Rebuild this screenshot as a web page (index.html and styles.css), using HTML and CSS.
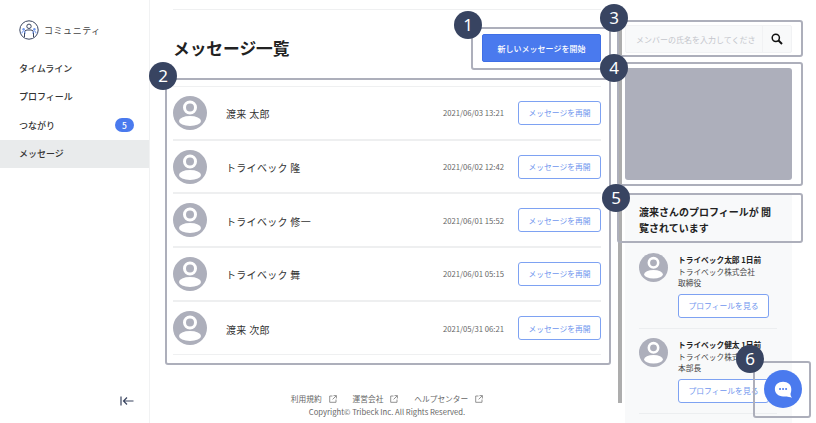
FILE: index.html
```html
<!DOCTYPE html>
<html lang="ja">
<head>
<meta charset="utf-8">
<title>メッセージ一覧</title>
<link rel="stylesheet" href="styles.css">
</head>
<body>
<svg class="defs" width="0" height="0" aria-hidden="true">
  <symbol id="avatar" viewBox="0 0 34 34">
    <circle cx="17" cy="17" r="17" fill="#adafbb"/>
    <circle cx="17" cy="11.5" r="5.5" fill="none" stroke="#fff" stroke-width="3"/>
    <ellipse cx="17" cy="25" rx="11" ry="5" fill="#fff"/>
  </symbol>
  <symbol id="ext" viewBox="0 0 8 8">
    <path d="M3.5 1H.7v6.3H7V4.5M4.5.6h2.900v2.900M7.200.8 3.600 4.400" fill="none" stroke="#777" stroke-width=".8"/>
  </symbol>
</svg>
<div class="app">
  <aside class="sidebar">
    <div class="brand">
      <svg class="brand-icon" viewBox="0 0 20 20" width="20" height="20">
        <circle cx="10" cy="10" r="9.2" fill="#fff" stroke="#3a4560" stroke-width="1"/>
        <circle cx="10" cy="6.300" r="2.200" fill="none" stroke="#3a4560" stroke-width="1"/>
        <path d="M5.500 17V12.500Q5.500 10 8 10h4q2.500 0 2.500 2.500V17" fill="none" stroke="#3a4560" stroke-width="1"/>
        <circle cx="4.600" cy="9.200" r="1.200" fill="#6f97ee"/>
        <circle cx="15.400" cy="9.200" r="1.200" fill="#6f97ee"/>
        <path d="M2.800 13.500q.5-2.500 1.800-2.500t1.800 2.500M13.600 13.500q.5-2.500 1.800-2.500t1.800 2.500" fill="none" stroke="#6f97ee" stroke-width="1"/>
      </svg>
      <span class="brand-name">コミュニティ</span>
    </div>
    <nav class="nav">
      <a class="nav-item">タイムライン</a>
      <a class="nav-item">プロフィール</a>
      <a class="nav-item">つながり<span class="badge">5</span></a>
      <a class="nav-item active">メッセージ</a>
    </nav>
    <div class="collapse">
      <svg viewBox="0 0 14 10" width="14" height="10"><path d="M1 .5v9M13.500 5H3.500M7 1.500 3.500 5 7 8.500" fill="none" stroke="#3a4560" stroke-width="1.200"/></svg>
    </div>
  </aside>

  <main class="main">
    <div class="main-head">
      <h1 class="title">メッセージ一覧</h1>
      <button class="btn-primary">新しいメッセージを開始</button>
    </div>
    <ul class="list">
      <li class="row"><svg class="avatar"><use href="#avatar"/></svg><span class="name">渡来 太郎</span><time class="date">2021/06/03 13:21</time><button class="btn-outline">メッセージを再開</button></li>
      <li class="row"><svg class="avatar"><use href="#avatar"/></svg><span class="name">トライベック 隆</span><time class="date">2021/06/02 12:42</time><button class="btn-outline">メッセージを再開</button></li>
      <li class="row"><svg class="avatar"><use href="#avatar"/></svg><span class="name">トライベック 修一</span><time class="date">2021/06/01 15:52</time><button class="btn-outline">メッセージを再開</button></li>
      <li class="row"><svg class="avatar"><use href="#avatar"/></svg><span class="name">トライベック 舞</span><time class="date">2021/06/01 05:15</time><button class="btn-outline">メッセージを再開</button></li>
      <li class="row"><svg class="avatar"><use href="#avatar"/></svg><span class="name">渡来 次郎</span><time class="date">2021/05/31 06:21</time><button class="btn-outline">メッセージを再開</button></li>
    </ul>
    <footer class="footer">
      <div class="links">
        <a>利用規約<svg class="ext"><use href="#ext"/></svg></a>
        <a>運営会社<svg class="ext"><use href="#ext"/></svg></a>
        <a>ヘルプセンター<svg class="ext"><use href="#ext"/></svg></a>
      </div>
      <p class="copy">Copyright© Tribeck Inc. All Rights Reserved.</p>
    </footer>
  </main>

  <div class="scrollbar"></div>

  <aside class="side">
    <div class="search">
      <input class="search-input" placeholder="メンバーの氏名を入力してください" readonly>
      <button class="search-btn" aria-label="検索">
        <svg viewBox="0 0 12 12" width="12" height="12"><circle cx="4.800" cy="4.800" r="3.600" fill="none" stroke="#111" stroke-width="1.500"/><path d="M7.500 7.500 11 11" stroke="#111" stroke-width="1.900"/></svg>
      </button>
    </div>
    <div class="banner"></div>
    <section class="viewers">
      <h2 class="viewers-title">渡来さんのプロフィールが 閲覧されています</h2>
      <div class="viewer">
        <svg class="viewer-avatar"><use href="#avatar"/></svg>
        <div class="viewer-body">
          <p class="viewer-name">トライベック太郎 1日前</p>
          <p class="viewer-meta">トライベック株式会社</p>
          <p class="viewer-meta">取締役</p>
          <button class="btn-outline btn-profile">プロフィールを見る</button>
        </div>
      </div>
      <div class="viewer">
        <svg class="viewer-avatar"><use href="#avatar"/></svg>
        <div class="viewer-body">
          <p class="viewer-name">トライベック健太 1日前</p>
          <p class="viewer-meta">トライベック株式会社</p>
          <p class="viewer-meta">本部長</p>
          <button class="btn-outline btn-profile">プロフィールを見る</button>
        </div>
      </div>
    </section>
  </aside>
</div>

<div class="note note-1"></div>
<div class="note note-2"></div>
<div class="note note-3"></div>
<div class="note note-4"></div>
<div class="note note-5"></div>
<div class="note note-6"></div>
<span class="pin pin-1">1</span>
<span class="pin pin-2">2</span>
<span class="pin pin-3">3</span>
<span class="pin pin-4">4</span>
<span class="pin pin-5">5</span>
<span class="pin pin-6">6</span>
<button class="chat" aria-label="チャット">
  <svg viewBox="0 0 22 22" width="19" height="19"><path d="M10.500 2C5 2 1 5.500 1 10.500S5 19 10.500 19c2.500 0 5 0 10.500 1.500-1.500-1.800-2-3-1.800-5 .8-1.500.8-3.200.8-5C20 5.500 16 2 10.500 2Z" fill="#fff"/><circle cx="7" cy="10.500" r="1.200" fill="#4a7aee"/><circle cx="10.500" cy="10.500" r="1.200" fill="#4a7aee"/><circle cx="14" cy="10.500" r="1.200" fill="#4a7aee"/></svg>
</button>
</body>
</html>
```
FILE: styles.css
```css
* { box-sizing: border-box; }
html, body { margin: 0; height: 423px; overflow: hidden; }
body {
  position: relative;
  background: #fff;
  color: #333;
  font-family: "Noto Sans CJK JP", "Noto Sans", sans-serif;
}
p, h1, h2, ul { margin: 0; padding: 0; }
button { font-family: inherit; cursor: pointer; }
.defs { position: absolute; }

.app { display: flex; height: 423px; }

.sidebar {
  width: 150px;
  flex: none;
  display: flex;
  flex-direction: column;
  border-right: 1px solid #f1f2f3;
}
.brand { display: flex; align-items: center; gap: 5px; margin: 20px 0 14px; padding-left: 19px; height: 20px; }
.brand-icon { flex: none; }
.brand-name { font-size: 9px; letter-spacing: .55px; color: #444; }
.nav { display: flex; flex-direction: column; }
.nav-item {
  height: 28.5px;
  padding: 0 15px 0 19px;
  display: flex;
  align-items: center;
  justify-content: space-between;
  font-size: 9px;
  font-weight: 500;
  color: #333;
}
.nav-item.active { background: #e9ebec; }
.badge {
  width: 19px;
  height: 14px;
  border-radius: 7px;
  background: #4a7aee;
  color: #fff;
  font-size: 8.5px;
  line-height: 14px;
  text-align: center;
}
.collapse { margin-top: auto; padding: 0 0 17px 120px; line-height: 0; }

.main { width: 468px; flex: none; padding: 0 17px 0 23px; display: flex; flex-direction: column; }
.main-head {
  height: 77px;
  flex: none;
  margin-top: 9px;
  border-top: 1px solid #eff0f1;
  display: flex;
  align-items: flex-start;
  justify-content: space-between;
}
.title { font-size: 16.7px; font-weight: 700; color: #222; margin: 25px 0 0; line-height: 27px; }
.btn-primary {
  width: 119px;
  height: 28px;
  margin-top: 24px;
  border: 1px solid #3f6fe6;
  border-radius: 2px;
  background: #4a7aee;
  color: #fff;
  font-size: 8px;
  font-weight: 500;
  padding: 0;
}
.list { list-style: none; border-top: 1px solid #eff0f1; }
.row {
  height: 53.7px;
  display: flex;
  align-items: center;
  border-bottom: 2px solid #eeeff0;
}
.row:last-child { border-bottom: 1px solid #eff0f1; }
.avatar { width: 34px; height: 34px; flex: none; }
.name { margin-left: 19px; padding-top: 2px; font-size: 10px; color: #333; letter-spacing: .3px; }
.date { margin-left: auto; font-size: 7.7px; color: #666; }
.btn-outline {
  border: 1px solid #7ea2f2;
  border-radius: 3px;
  background: #fff;
  color: #6f96ee;
  font-size: 7.8px;
  padding: 0;
}
.row .btn-outline { width: 83px; height: 24px; margin-left: 14px; }

.footer { margin-top: 38px; text-align: center; color: #666; font-size: 7.7px; }
.links { display: flex; justify-content: center; gap: 16px; line-height: 12px; }
.links a { display: flex; align-items: center; gap: 7px; }
.ext { width: 8px; height: 8px; }
.copy { line-height: 14px; }

.scrollbar { position: absolute; left: 618px; top: 28px; width: 4px; height: 375px; background: #adadad; }

.side { width: 167px; margin-left: 7px; flex: none; display: flex; flex-direction: column; }
.search { display: flex; flex: none; margin-top: 25px; height: 28px; border: 1px solid #f1f2f4; border-radius: 2px; background: #f8f9fa; }
.search-input {
  flex: 1;
  min-width: 0;
  border: 0;
  border-right: 1px solid #f1f2f4;
  background: transparent;
  padding: 0 7px 0 10px;
  font: 8px "Noto Sans CJK JP", sans-serif;
}
.search-input::placeholder { color: #c4c6cc; }
.search-btn { width: 28px; border: 0; padding: 0; background: transparent; line-height: 0; }
.banner { flex: none; height: 112px; margin-top: 15px; border-radius: 3px; background: #adafbb; }
.viewers { margin-top: 14px; flex: 1 0 auto; background: #f8f9fa; padding: 10px 15px 0 14px; }
.viewers-title { font-size: 10px; font-weight: 700; color: #222; line-height: 15.5px; margin-bottom: 18px; }
.viewer { display: flex; gap: 10px; padding-bottom: 10px; margin-bottom: 9.5px; border-bottom: 1px solid #eceef0; }
.viewer-avatar { width: 29px; height: 29px; flex: none; }
.viewer-body { padding-top: 1px; }
.viewer-name { font-size: 7.7px; font-weight: 700; color: #222; line-height: 11.5px; }
.viewer-meta { font-size: 7.7px; color: #444; line-height: 11.5px; }
.btn-profile { display: block; width: 91px; height: 24px; margin-top: 5px; }

.note { position: absolute; border: 2px solid #adafbb; border-radius: 3px; }
.note-1 { left: 471px; top: 27px; width: 140px; height: 43px; }
.note-2 { left: 165px; top: 78px; width: 446px; height: 287px; }
.note-3 { left: 617px; top: 20px; width: 186px; height: 37px; }
.note-4 { left: 617px; top: 62px; width: 186px; height: 124px; }
.note-5 { left: 617px; top: 193px; width: 186px; height: 50px; }
.note-6 { left: 753px; top: 361px; width: 58px; height: 57px; }
.pin {
  position: absolute;
  width: 28px;
  height: 28px;
  border-radius: 50%;
  background: #384461;
  color: #fff;
  font: 400 17px/28px "Noto Sans", sans-serif;
  text-align: center;
}
.pin-1 { left: 454px; top: 11px; }
.pin-2 { left: 149px; top: 62px; }
.pin-3 { left: 600px; top: 4px; }
.pin-4 { left: 600px; top: 54px; }
.pin-5 { left: 602px; top: 184px; }
.pin-6 { left: 736px; top: 345px; }
.chat {
  position: absolute;
  left: 764px;
  top: 370px;
  width: 38px;
  height: 38px;
  border: 0;
  border-radius: 50%;
  background: #4a7aee;
  padding: 0;
  display: flex;
  align-items: center;
  justify-content: center;
}
```
